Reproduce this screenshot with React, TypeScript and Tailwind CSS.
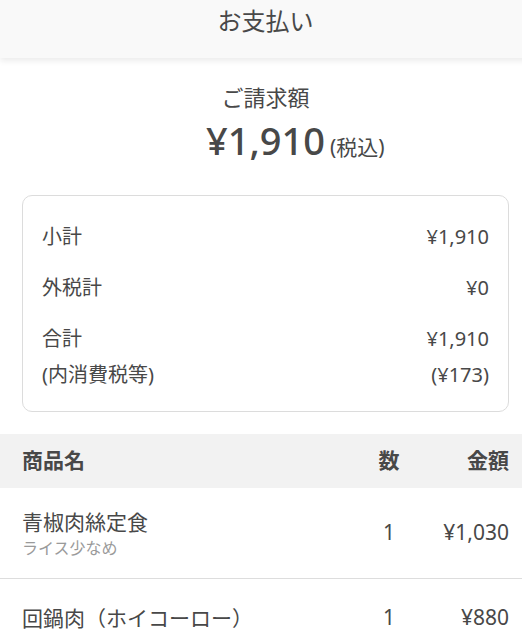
import React from "react";

const items = [
  { name: "青椒肉絲定食", note: "ライス少なめ", qty: 1, price: "¥1,030" },
  { name: "回鍋肉（ホイコーロー）", note: "", qty: 1, price: "¥880" },
];

const App: React.FC = () => {
  return (
    <div className="w-full overflow-hidden bg-white">
      <div
        className="w-[531px] min-h-[640px] bg-white text-[#484848]"
        style={{ fontFamily: '"Noto Sans", "Noto Sans CJK JP", sans-serif' }}
      >
        <header className="h-[58px] bg-[#f9f9f9] shadow-[0_3px_6px_rgba(0,0,0,0.08)] flex justify-center pt-[4px]">
          <h1 className="text-[24px] leading-[34px]">お支払い</h1>
        </header>

        <div className="flex flex-col items-center pt-[24px]">
          <p className="text-[22px] leading-[30px]">ご請求額</p>
          <div className="mt-[4px] w-full grid grid-cols-[1fr_auto_1fr] items-baseline">
            <span />
            <span className="text-[38px] leading-[48px] font-medium">¥1,910</span>
            <span className="ml-[5px] text-[21px]">(税込)</span>
          </div>
        </div>

        <div className="mx-[22px] mt-[31px] rounded-[10px] border border-[#dcdcdc] px-[19px] pt-[23px] pb-[18px] text-[20px] leading-[36px]">
          <div className="flex justify-between">
            <span>小計</span>
            <span>¥1,910</span>
          </div>
          <div className="mt-[15px] flex justify-between">
            <span>外税計</span>
            <span>¥0</span>
          </div>
          <div className="mt-[15px] flex justify-between">
            <div className="flex flex-col">
              <span>合計</span>
              <span>(内消費税等)</span>
            </div>
            <div className="flex flex-col items-end">
              <span>¥1,910</span>
              <span>(¥173)</span>
            </div>
          </div>
        </div>

        <div className="mt-[22px] h-[54px] bg-[#f2f2f2] flex items-center px-[22px] text-[21px] font-bold">
          <span className="flex-1">商品名</span>
          <span className="w-[40px] text-center">数</span>
          <span className="w-[100px] text-right">金額</span>
        </div>

        {items.map((item, i) => (
          <div
            key={i}
            className={`flex items-center px-[22px] text-[21px] ${
              i === 0 ? "h-[91px] border-b border-[#dddddd]" : "h-[78px]"
            }`}
          >
            <div className="flex-1 flex flex-col">
              <span className="leading-[29px]">{item.name}</span>
              {item.note && (
                <span className="text-[16px] leading-[22px] text-[#9a9a9a]">{item.note}</span>
              )}
            </div>
            <span className="w-[40px] text-center">{item.qty}</span>
            <span className="w-[100px] text-right">{item.price}</span>
          </div>
        ))}
      </div>
    </div>
  );
};

export default App;
